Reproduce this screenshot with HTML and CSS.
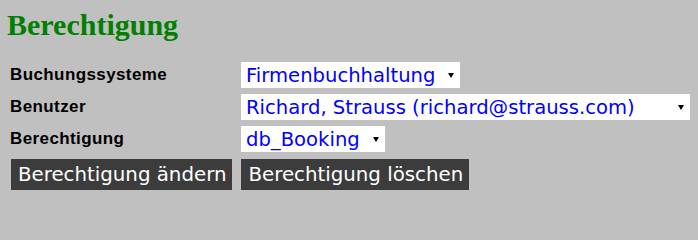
FILE: index.html
```html
<!DOCTYPE html>
<html lang="de">
<head>
<meta charset="utf-8">
<title>Berechtigung</title>
<link rel="stylesheet" href="styles.css">
</head>
<body>
<h1 class="title">Berechtigung</h1>
<form class="perm-form">
  <div class="grid">
    <label class="label">Buchungssysteme</label>
    <div class="select w-system"><span class="value">Firmenbuchhaltung</span><svg class="arrow" width="6" height="5" viewBox="0 0 6 5"><polygon points="0,0 6,0 3,5" fill="#000"/></svg></div>
    <label class="label">Benutzer</label>
    <div class="select w-user"><span class="value">Richard, Strauss (richard@strauss.com)</span><svg class="arrow" width="6" height="5" viewBox="0 0 6 5"><polygon points="0,0 6,0 3,5" fill="#000"/></svg></div>
    <label class="label">Berechtigung</label>
    <div class="select w-role"><span class="value">db_Booking</span><svg class="arrow" width="6" height="5" viewBox="0 0 6 5"><polygon points="0,0 6,0 3,5" fill="#000"/></svg></div>
  </div>
  <div class="actions">
    <button type="button" class="btn">Berechtigung ändern</button>
    <button type="button" class="btn">Berechtigung löschen</button>
  </div>
</form>
</body>
</html>
```
FILE: styles.css
```css
html, body {
  margin: 0;
  padding: 0;
  background: #c0c0c0;
}
body {
  width: 698px;
  height: 206px;
  overflow: hidden;
}
.title {
  margin: 8px 0 0 7px;
  font-family: "Liberation Serif", "Times New Roman", serif;
  font-weight: bold;
  font-size: 30px;
  line-height: 34px;
  color: #008000;
}
.perm-form {
  margin: 20px 0 0 10px;
}
.grid {
  display: grid;
  grid-template-columns: 231px auto;
  row-gap: 6px;
  align-items: center;
  justify-items: start;
}
.label {
  font-family: "Liberation Sans", Arial, sans-serif;
  font-weight: bold;
  font-size: 17px;
  letter-spacing: 0.4px;
  color: #000;
}
.select {
  display: flex;
  align-items: center;
  justify-content: space-between;
  box-sizing: border-box;
  height: 26px;
  padding: 0 6px 0 5px;
  background: #fff;
  font-family: "DejaVu Sans", Verdana, sans-serif;
  font-size: 19.6px;
  color: #0000ff;
  white-space: nowrap;
}
.w-system { width: 219px; }
.w-user { width: 449px; }
.w-role { width: 144px; }
.arrow {
  flex: none;
  display: block;
}
.actions {
  display: flex;
  gap: 9px;
  margin: 7px 0 0 1px;
}
.btn {
  height: 31px;
  padding: 0 6px 0 7px;
  border: none;
  border-radius: 0;
  background: #3c3c3c;
  color: #fff;
  font-family: "DejaVu Sans", Verdana, sans-serif;
  font-size: 19.8px;
  line-height: 31px;
}
```
